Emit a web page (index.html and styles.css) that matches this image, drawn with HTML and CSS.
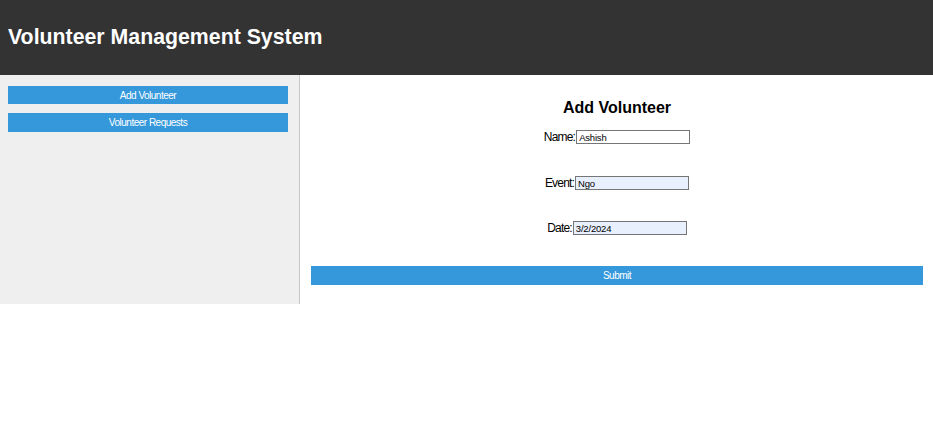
FILE: index.html
```html
<!DOCTYPE html>
<html>
<head>
<meta charset="utf-8">
<link rel="stylesheet" href="styles.css">
</head>
<body>
<header class="header">
  <h1 class="title">Volunteer Management System</h1>
</header>
<div class="layout">
  <aside class="sidebar">
    <button class="btn side-btn">Add Volunteer</button>
    <button class="btn side-btn">Volunteer Requests</button>
  </aside>
  <main class="main">
    <h2 class="form-title">Add Volunteer</h2>
    <div class="row"><label class="lbl">Name:</label><input class="field" type="text" value="Ashish"></div>
    <div class="row"><label class="lbl">Event:</label><input class="field filled" type="text" value="Ngo"></div>
    <div class="row row-date"><label class="lbl">Date:</label><input class="field filled" type="text" value="3/2/2024"></div>
    <button class="btn submit">Submit</button>
  </main>
</div>
</body>
</html>
```
FILE: styles.css
```css
html, body {
  margin: 0;
  padding: 0;
  background: #fff;
  font-family: "Liberation Sans", Arial, sans-serif;
}
.header {
  background: #333333;
  height: 75px;
  display: flex;
  align-items: center;
  padding: 0 8px 1px;
  box-sizing: border-box;
}
.title {
  margin: 0;
  color: #fff;
  font-size: 21.3px;
  font-weight: bold;
}
.layout {
  display: flex;
  align-items: stretch;
}
.sidebar {
  width: 300px;
  height: 229px;
  box-sizing: border-box;
  background: #efefef;
  border-right: 1px solid #c8c8c8;
  padding: 11px 11px 0 8px;
  display: flex;
  flex-direction: column;
  gap: 9px;
}
.btn {
  display: block;
  border: none;
  background: #3498db;
  color: #fff;
  font-family: "Liberation Sans", Arial, sans-serif;
  font-size: 10px;
  letter-spacing: -0.5px;
  padding: 0;
  margin: 0;
  width: 100%;
}
.side-btn {
  height: 18px;
}
.side-btn + .side-btn {
  height: 19px;
}
.main {
  flex: 1;
  padding: 0 10px 0 11px;
  display: flex;
  flex-direction: column;
  align-items: center;
}
.form-title {
  margin: 23px 0 0;
  font-size: 16px;
  font-weight: bold;
  color: #000;
  line-height: 19px;
}
.row {
  display: flex;
  align-items: center;
  margin-top: 12px;
  height: 16px;
  font-size: 12px;
}
.row + .row {
  margin-top: 30px;
}
.row-date {
  margin-top: 29px !important;
}
.lbl {
  color: #000;
  letter-spacing: -0.8px;
}
.field {
  width: 114px;
  height: 14px;
  box-sizing: border-box;
  border: 1px solid #767676;
  padding: 0 2px;
  font-family: "Liberation Sans", Arial, sans-serif;
  font-size: 9.5px;
  letter-spacing: -0.2px;
  background: #fff;
  margin: 0 0 0 1px;
}
.filled {
  background: #e8f0fe;
}
.submit {
  margin-top: 30px;
  height: 19px;
}
```
